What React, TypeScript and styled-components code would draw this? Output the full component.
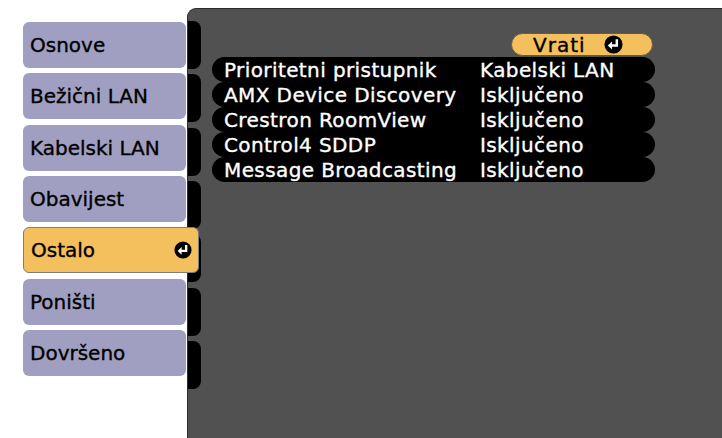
import styled, { createGlobalStyle } from 'styled-components';

const tabs = ['Osnove', 'Bežični LAN', 'Kabelski LAN', 'Obavijest', 'Ostalo', 'Poništi', 'Dovršeno'];
const activeTab = 'Ostalo';

const settings = [
  { label: 'Prioritetni pristupnik', value: 'Kabelski LAN' },
  { label: 'AMX Device Discovery', value: 'Isključeno' },
  { label: 'Crestron RoomView', value: 'Isključeno' },
  { label: 'Control4 SDDP', value: 'Isključeno' },
  { label: 'Message Broadcasting', value: 'Isključeno' },
];

const EnterIcon = ({ size }: { size: number }) => (
  <svg width={size} height={size} viewBox='0 0 20 20'>
    <circle cx='10' cy='10' r='9.5' fill='#000' />
    <path d='M13.5 4.5 V11 H7.5' stroke='#fff' strokeWidth='2.6' fill='none' />
    <polygon points='4,11 8.5,6.8 8.5,15.2' fill='#fff' />
  </svg>
);

const App = () => {
  return (
    <Page>
      <GlobalStyle />
      <Sidebar>
        {tabs.map((name) => (
          <Tab key={name} $active={name === activeTab}>
            <span>{name}</span>
            {name === activeTab && <EnterIcon size={18} />}
          </Tab>
        ))}
      </Sidebar>
      <Panel>
        <BumpColumn>
          {tabs.map((name) => (
            <Bump key={name} />
          ))}
        </BumpColumn>
        <Content>
          <BackButton>
            <span>Vrati</span>
            <EnterIcon size={19} />
          </BackButton>
          <Rows>
            {settings.map(({ label, value }) => (
              <Row key={label}>
                <Label>{label}</Label>
                <Value>{value}</Value>
              </Row>
            ))}
          </Rows>
        </Content>
      </Panel>
    </Page>
  );
};

export default App;

const GlobalStyle = createGlobalStyle`
  html, body {
    margin: 0;
    padding: 0;
    background: #fff;
    overflow: hidden;
  }
  body {
    font-family: 'DejaVu Sans', 'Liberation Sans', sans-serif;
    -webkit-text-stroke: 0.35px currentColor;
  }
`;

const Page = styled.div`
  display: flex;
  width: 722px;
  height: 438px;
`;

const Sidebar = styled.nav`
  display: flex;
  flex-direction: column;
  gap: 5.33px;
  width: 164px;
  padding: 22px 0 0 23px;
  flex-shrink: 0;
`;

const Tab = styled.div<{ $active?: boolean }>`
  position: relative;
  z-index: 1;
  display: flex;
  align-items: center;
  justify-content: space-between;
  box-sizing: border-box;
  height: 46px;
  width: ${({ $active }) => ($active ? '176px' : '163px')};
  padding: 0 6px 0 7px;
  border-radius: 6px;
  background: ${({ $active }) => ($active ? '#f4bf5d' : '#a09fc1')};
  border: ${({ $active }) => ($active ? '1px solid #7d7d7d' : 'none')};
  color: #000;
  font-size: 20px;
  line-height: 1;
`;

const Panel = styled.main`
  display: flex;
  flex: 1;
  margin-top: 8px;
  background: #515151;
  border-top: 1px solid #2b2b2b;
  border-left: 1px solid #2b2b2b;
  border-top-left-radius: 9px;
`;

const BumpColumn = styled.div`
  display: flex;
  flex-direction: column;
  gap: 5.33px;
  width: 13px;
  padding-top: 12px;
  flex-shrink: 0;
`;

const Bump = styled.div`
  height: 48px;
  background: #000;
  border-radius: 0 8px 8px 0;
`;

const Content = styled.section`
  display: flex;
  flex-direction: column;
  align-items: flex-end;
  width: 443px;
  margin-left: 11px;
  padding-top: 24px;
`;

const BackButton = styled.div`
  display: flex;
  align-items: center;
  gap: 18px;
  box-sizing: border-box;
  width: 142px;
  height: 23px;
  margin-right: 2px;
  padding-left: 21px;
  border: 1px solid #6a5a3a;
  border-radius: 12px;
  background: #f4bf5d;
  color: #000;
  font-size: 20px;
  letter-spacing: 1px;
  line-height: 1;
`;

const Rows = styled.div`
  display: flex;
  flex-direction: column;
  width: 100%;
  margin-top: 1px;
`;

const Row = styled.div`
  display: grid;
  grid-template-columns: 256px 1fr;
  align-items: center;
  height: 25px;
  padding-left: 12px;
  border-radius: 12.5px;
  background: #000;
  color: #fff;
  font-size: 20px;
  letter-spacing: 0.4px;
  line-height: 1;
`;

const Label = styled.span`
  white-space: nowrap;
`;

const Value = styled.span`
  white-space: nowrap;
`;
